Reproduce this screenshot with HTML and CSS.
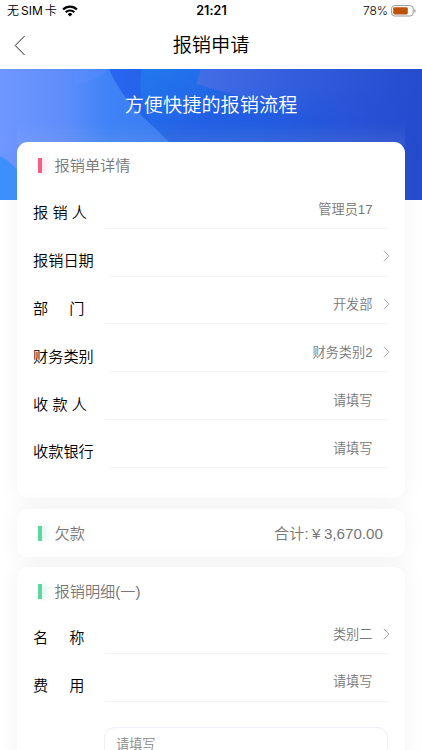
FILE: index.html
```html
<!DOCTYPE html>
<html lang="zh-CN">
<head>
<meta charset="utf-8">
<meta name="viewport" content="width=device-width, initial-scale=1">
<title>报销申请</title>
<link rel="stylesheet" href="styles.css">
</head>
<body>
<div class="screen">
  <header class="status">
    <div class="carrier"><span>无<span class="sim">SIM</span>卡</span>
      <svg class="wifi" width="16" height="12" viewBox="0 0 16 12"><g fill="none" stroke="#000" stroke-width="2.1"><path d="M1.1 4.5a9.8 9.8 0 0 1 13.8 0"/><path d="M3.7 7.2a6.1 6.1 0 0 1 8.6 0"/></g><path d="M5.6 9.2a3.4 3.4 0 0 1 4.8 0L8 11.6z"/></svg>
    </div>
    <div class="clock">21:21</div>
    <div class="power">78%
      <svg width="25" height="12" viewBox="0 0 25 12"><rect x=".6" y=".6" width="21.6" height="10.4" rx="3" fill="#fff" stroke="#999"/><rect x="2.2" y="2.2" width="14.6" height="7.2" rx="1.4" fill="#bd540c"/><path d="M23.4 4v3.8q1.3-.5 1.3-1.9T23.4 4z" fill="#999"/></svg>
    </div>
  </header>
  <nav class="navbar">
    <svg class="back" width="12" height="21" viewBox="0 0 12 21"><path d="M10.6 1 1.2 10.5l9.4 9.5" fill="none" stroke="#222" stroke-width="1"/></svg>
    <h1>报销申请</h1>
    <i></i>
  </nav>
  <section class="hero">
    <svg class="hero-art" width="422" height="131" viewBox="0 0 422 131">
      <defs>
        <linearGradient id="base" gradientUnits="userSpaceOnUse" x1="109" x2="422" y1="0" y2="0"><stop offset="0" stop-color="#2a66f2"/><stop offset=".16" stop-color="#2362e6"/><stop offset=".5" stop-color="#225ce0"/><stop offset=".75" stop-color="#2653d9"/><stop offset="1" stop-color="#254bce"/></linearGradient>
        <linearGradient id="left" gradientUnits="userSpaceOnUse" x1="0" x2="165" y1="0" y2="0"><stop offset="0" stop-color="#6f97ff"/><stop offset=".4" stop-color="#5d8dfa"/><stop offset=".65" stop-color="#3f83f7"/><stop offset="1" stop-color="#3a7cf3"/></linearGradient>
        <linearGradient id="sweep" gradientUnits="userSpaceOnUse" x1="75" x2="112" y1="0" y2="0"><stop offset="0" stop-color="#5b8dfb"/><stop offset="1" stop-color="#4d86f8"/></linearGradient>
        <linearGradient id="bright" gradientUnits="userSpaceOnUse" x1="150" x2="185" y1="0" y2="62"><stop offset="0" stop-color="#2277ee"/><stop offset="1" stop-color="#2277ee" stop-opacity="0"/></linearGradient>
        <linearGradient id="panel" gradientUnits="userSpaceOnUse" x1="196" x2="422" y1="0" y2="0"><stop offset="0" stop-color="#426fe6"/><stop offset=".45" stop-color="#315ddd"/><stop offset="1" stop-color="#254bce"/></linearGradient>
        <linearGradient id="fall" x1="0" x2="0" y1="0" y2="1"><stop offset="0" stop-color="#fff"/><stop offset=".3" stop-color="#fff"/><stop offset="1" stop-color="#000"/></linearGradient>
        <linearGradient id="glow" gradientUnits="userSpaceOnUse" x1="0" x2="0" y1="52" y2="73"><stop offset="0" stop-color="#fff" stop-opacity="0"/><stop offset="1" stop-color="#fff" stop-opacity=".07"/></linearGradient>
        <mask id="soft" maskUnits="userSpaceOnUse" x="190" y="0" width="232" height="60"><path fill="url(#fall)" d="M190 0h232v60H190z"/></mask>
      </defs>
      <path fill="url(#base)" d="M0 0h422v131H0z"/>
      <path fill="url(#bright)" d="M142 0h160v80H174Q133 45 142 0z"/>
      <path fill="url(#panel)" mask="url(#soft)" d="M201 0h221v60H355L196 15z"/>
      <path fill="url(#left)" d="M0 0h109q13 31 46 59l20 20v52H0z"/>
      <path fill="url(#sweep)" d="M75 0h34q-10 10-34 17z" opacity=".7"/>
      <path fill="#3d91fc" d="M0 87q12 6 24 22v22H0z"/>
      <path fill="url(#glow)" d="M17 52h388v24H17z"/>
    </svg>
    <p>方便快捷的报销流程</p>
  </section>
  <main class="cards">
    <section class="card details">
      <h2 class="heading pink">报销单详情</h2>
      <div class="row"><label>报 销 人</label><div class="field"><span>管理员17</span></div></div>
      <div class="row"><label>报销日期</label><div class="field"><svg class="arrow" viewBox="0 0 7 12"><path d="m.8.8 5.2 5.2-5.2 5.2"/></svg></div></div>
      <div class="row"><label>部     门</label><div class="field"><span>开发部</span><svg class="arrow" viewBox="0 0 7 12"><path d="m.8.8 5.2 5.2-5.2 5.2"/></svg></div></div>
      <div class="row"><label>财务类别</label><div class="field"><span>财务类别2</span><svg class="arrow" viewBox="0 0 7 12"><path d="m.8.8 5.2 5.2-5.2 5.2"/></svg></div></div>
      <div class="row"><label>收 款 人</label><div class="field"><span>请填写</span></div></div>
      <div class="row"><label>收款银行</label><div class="field"><span>请填写</span></div></div>
    </section>
    <section class="card debt">
      <h2 class="heading green">欠款</h2>
      <div class="total">合计:<span class="yen">¥</span>3,670.00</div>
    </section>
    <section class="card items">
      <h2 class="heading green">报销明细(一)</h2>
      <div class="row"><label>名     称</label><div class="field"><span>类别二</span><svg class="arrow" viewBox="0 0 7 12"><path d="m.8.8 5.2 5.2-5.2 5.2"/></svg></div></div>
      <div class="row"><label>费     用</label><div class="field"><span>请填写</span></div></div>
      <div class="note">请填写</div>
    </section>
  </main>
</div>
</body>
</html>
```
FILE: styles.css
```css
* { box-sizing: border-box; }
body {
  margin: 0;
  background: #fff;
  font-family: "Liberation Sans", "Noto Sans CJK SC", sans-serif;
  font-weight: 350;
  color: #000;
}
.screen { width: 422px; height: 750px; overflow: hidden; }
.status {
  height: 21px;
  display: grid;
  grid-template-columns: 1fr auto 1fr;
  align-items: center;
  padding: 0 6px 0 7px;
  font: 350 12px/22px Inter, "Noto Sans CJK SC", sans-serif;
}
.carrier, .power { display: flex; align-items: center; gap: 5px; }
.power { justify-content: flex-end; gap: 3px; }
.sim { margin: 0 2px; font-weight: 400; }
.clock { font-weight: 600; font-size: 12.5px; letter-spacing: .1px; }
.navbar {
  height: 48px;
  display: grid;
  grid-template-columns: 30px 1fr 30px;
  align-items: center;
  padding: 0 14px;
}
.navbar h1 { margin: 0; font-size: 19.2px; line-height: 46px; padding-top: 2px; font-weight: 350; text-align: center; }
.back { display: block; }
.hero { height: 131px; position: relative; color: #fff; }
.hero-art { position: absolute; inset: 0; }
.hero p { position: relative; margin: 0; text-align: center; font-size: 19.2px; line-height: 73px; }
.cards { position: relative; margin: -58.5px 17px 0 16.5px; display: flex; flex-direction: column; gap: 11px; }
.card { background: #fff; border-radius: 11px; box-shadow: 0 0 20px rgba(110, 110, 110, .09); padding: 0 17px 0 16.5px; }
.details { height: 356.5px; }
.debt { height: 48px; display: flex; align-items: center; justify-content: space-between; padding-right: 22px; }
.items { height: 240px; margin-top: -1px; }
.heading {
  margin: 0;
  height: 48px;
  display: flex;
  align-items: center;
  gap: 12.5px;
  padding: 0 0 3px 5px;
  font-size: 15.2px;
  font-weight: 350;
  color: #777;
}
.details .heading { height: 39.6px; padding-top: 9px; }
.items .heading { height: 39px; padding-top: 9px; }
.heading::before { content: ""; width: 4px; height: 15px; margin-top: 3px; }
.pink::before { background: #fa5c83; box-shadow: 4px 0 5px rgba(250, 92, 131, .2); }
.green::before { background: #5bd7a0; box-shadow: 4px 0 5px rgba(91, 215, 160, .25); }
.row { display: flex; height: 47.8px; }
.row label { white-space: pre; font-size: 15.2px; line-height: 22px; padding-top: 21.4px; margin-right: 16px; min-width: 55.5px; }
.field {
  flex: 1;
  display: flex;
  justify-content: flex-end;
  border-bottom: 1px solid #f1f2fb;
  padding-right: 15.5px;
  position: relative;
  font-size: 13.2px;
  line-height: 20px;
  padding-top: 18.7px;
  color: #777;
}
.arrow { position: absolute; right: -2px; top: 21.5px; width: 7px; height: 12px; fill: none; stroke: #aaa; stroke-width: 1; }
.total { font-size: 15.2px; color: #777; padding-bottom: 2px; }
.yen { display: inline-block; width: 15.2px; text-align: center; }
.note { margin: 25px 0 0 71px; height: 90px; border: 1px solid #eceef8; border-radius: 11px; padding: 7px 11px; font-size: 13.2px; line-height: 20px; color: #888; }
```
